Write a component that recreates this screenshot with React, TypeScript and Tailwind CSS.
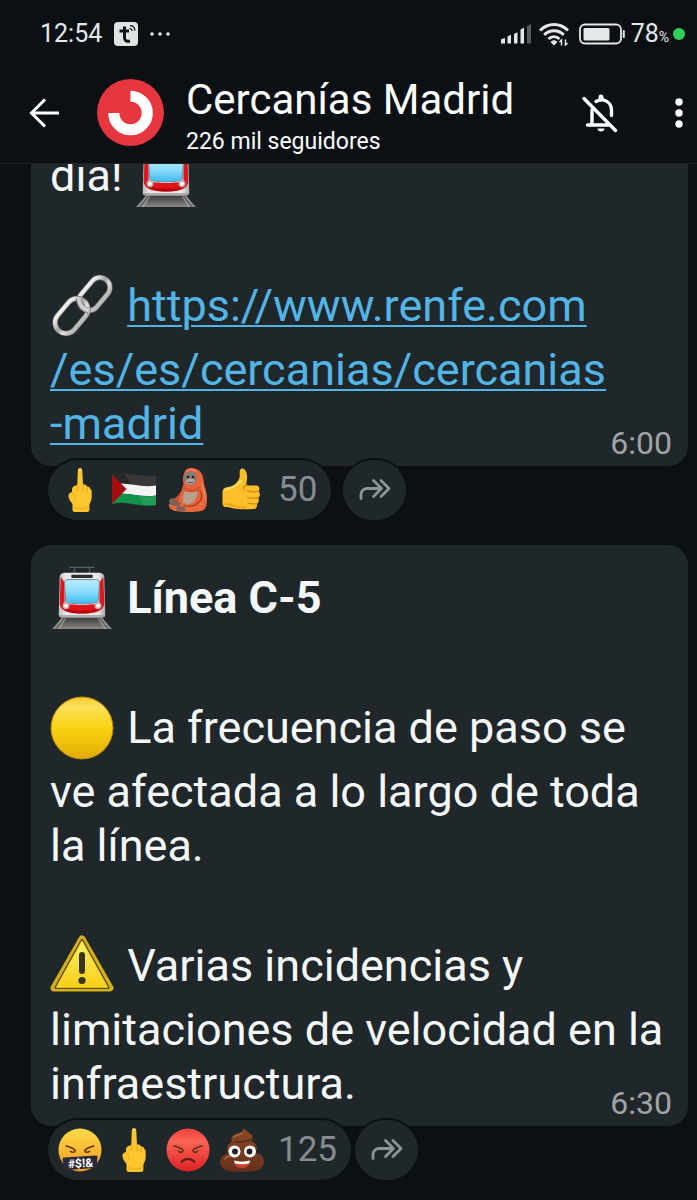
import type { ReactNode } from "react";

type IconProps = { className?: string };

const TrainEmoji = ({ className }: IconProps) => (
  <svg viewBox="0 0 64 66" className={className} role="img" aria-label="tren">
    <defs>
      <linearGradient id="glass" x1="0" y1="0" x2="0" y2="1">
        <stop offset="0" stopColor="#b9ecff" />
        <stop offset="0.5" stopColor="#8adcfc" />
        <stop offset="1" stopColor="#3fb9ee" />
      </linearGradient>
      <linearGradient id="bed" x1="0" y1="0" x2="0" y2="1">
        <stop offset="0" stopColor="#3c3a3a" />
        <stop offset="1" stopColor="#8c8989" />
      </linearGradient>
      <linearGradient id="shell" x1="0" y1="0" x2="1" y2="0">
        <stop offset="0" stopColor="#bdbdbd" />
        <stop offset="0.15" stopColor="#e9e9e9" />
        <stop offset="0.85" stopColor="#e9e9e9" />
        <stop offset="1" stopColor="#a9a9a9" />
      </linearGradient>
    </defs>
    <path d="M19 1.500h26M25 1.500l-1.500 3 2 3M39 1.500l1.500 3-2 3" fill="none" stroke="#566066" strokeWidth="1.200" />
    <path d="M12 53h40l11 12H1z" fill="url(#bed)" />
    <path d="M11 53L1 65h5l8-12zM53 53l10 12h-5l-8-12z" fill="#666" />
    <path d="M12 54L3 65M52 54l9 11M15 54L8 65M49 54l7 11" stroke="#b5b5b5" strokeWidth="1" />
    <path d="M15 7h34c4 0 6 2 6 5l1 38c0 2-1 3-3 3H11c-2 0-3-1-3-3l1-38c0-3 2-5 6-5z" fill="url(#shell)" />
    <path d="M10 11l4 6v21c4 3 32 3 36 0V17l4-6 1 28c-1 7-7 10-23 10S10 46 9 39z" fill="#e0141c" />
    <path d="M13 43c7 4 31 4 38 0-3 4-9 6-19 6s-16-2-19-6z" fill="#b80008" />
    <rect x="21" y="9" width="22" height="3.500" rx="0.800" fill="#2b2b2e" />
    <path d="M18 14h28c3 0 4 1 4 4l-1 16c0 3-1 4-4 4-7 1.500-19 1.500-26 0-3 0-4-1-4-4l-1-16c0-3 1-4 4-4z" fill="url(#glass)" stroke="#6f8791" strokeWidth="1" />
    <circle cx="15.500" cy="41" r="3.600" fill="#b7b0ae" />
    <circle cx="48.500" cy="41" r="3.600" fill="#b7b0ae" />
    <circle cx="15.500" cy="41" r="2.100" fill="#fff8ef" />
    <circle cx="48.500" cy="41" r="2.100" fill="#fff8ef" />
    <path d="M9 51.500h46" stroke="#9b9b9b" strokeWidth="1.500" />
  </svg>
);

const LinkEmoji = ({ className }: IconProps) => (
  <svg viewBox="0 0 64 64" className={className} role="img" aria-label="enlace">
    <defs>
      <linearGradient id="steel" x1="0" y1="0" x2="0" y2="1">
        <stop offset="0" stopColor="#efefed" />
        <stop offset="0.45" stopColor="#a3a3a1" />
        <stop offset="0.7" stopColor="#e2e2e0" />
        <stop offset="1" stopColor="#b9b9b7" />
      </linearGradient>
    </defs>
    <g fill="none">
      <rect x="-18.500" y="-10" width="37" height="20" rx="10" transform="translate(44.500 20) rotate(-50)" stroke="#6b6b6a" strokeWidth="5.400" />
      <rect x="-18.500" y="-10" width="37" height="20" rx="10" transform="translate(44.500 20) rotate(-50)" stroke="url(#steel)" strokeWidth="4" />
      <rect x="-19.500" y="-11" width="39" height="22" rx="11" transform="translate(21.500 42) rotate(-50)" stroke="#6b6b6a" strokeWidth="5.400" />
      <rect x="-19.500" y="-11" width="39" height="22" rx="11" transform="translate(21.500 42) rotate(-50)" stroke="url(#steel)" strokeWidth="4" />
      <path d="M28.500 24c.5 6 3.500 11 10 12.500" stroke="#6b6b6a" strokeWidth="5.400" />
      <path d="M28.500 23.500c.5 6 3.500 11.500 10.500 13" stroke="#cfcfcd" strokeWidth="4" />
    </g>
  </svg>
);

const YellowCircleEmoji = ({ className }: IconProps) => (
  <svg viewBox="0 0 64 64" className={className} role="img" aria-label="amarillo">
    <defs>
      <linearGradient id="sun" x1="0" y1="0" x2="0" y2="1">
        <stop offset="0" stopColor="#f6c92c" />
        <stop offset="0.16" stopColor="#fddf5c" />
        <stop offset="0.5" stopColor="#f8d312" />
        <stop offset="1" stopColor="#e3ab05" />
      </linearGradient>
    </defs>
    <circle cx="32" cy="32" r="31" fill="url(#sun)" stroke="#b98a0c" strokeWidth="1" />
  </svg>
);

const WarningEmoji = ({ className }: IconProps) => (
  <svg viewBox="0 0 64 64" className={className} role="img" aria-label="aviso">
    <defs>
      <linearGradient id="sign" x1="0" y1="0" x2="0" y2="1">
        <stop offset="0" stopColor="#fff069" />
        <stop offset="1" stopColor="#f7cf16" />
      </linearGradient>
    </defs>
    <path d="M32 5L60 54H4z" fill="#d3b01b" stroke="#d3b01b" strokeWidth="7" strokeLinejoin="round" />
    <path d="M32 6.500L58 53.500H6z" fill="url(#sign)" stroke="#5f4c13" strokeWidth="3" strokeLinejoin="round" />
    <path d="M32 7L57.500 53.200H6.500z" fill="url(#sign)" stroke="#f9dc2d" strokeWidth="1" strokeLinejoin="round" />
    <rect x="29" y="18" width="6" height="22" rx="3" fill="#37341f" />
    <circle cx="32" cy="46.500" r="3.600" fill="#37341f" />
  </svg>
);

const MiddleFingerEmoji = ({ className }: IconProps) => (
  <svg viewBox="0 0 44 44" className={className} aria-hidden="true">
    <path d="M22 0c1.600 0 2.200 1.200 2.300 3l.7 13.500c2-.3 3.600.2 4.100 2 1.800-.1 3 .8 3.300 2.500 1 .6 1.300 1.600 1.300 3.200v4.800c0 3.500-1.600 5.500-2.300 7.500V42c0 1.300-1 2-2.500 2H17c-1.500 0-2.500-.7-2.500-2v-6c-2-2.500-4-5-4-8 0-2.500 1.600-3.700 3.500-4v-2.500c0-2.300 1.600-3.500 4-4l1.300-1 .5-13.500C19.900 1.200 20.500 0 22 0z" fill="#fdc52e" />
    <path d="M19.300 17.500v5M25 17v6M29.200 19.500v5" stroke="#e8a520" strokeWidth="1" fill="none" strokeLinecap="round" />
    <path d="M14.500 25c2 2.500 3 3.500 2.500 7M15.500 39.500c5 1.500 11 1.500 15.500 0" stroke="#eeab1e" strokeWidth="1" fill="none" />
    <path d="M20.500 2.500c.8-1 2.200-1 3 0" stroke="#ffe69b" strokeWidth="1.200" fill="none" />
  </svg>
);

const FlagEmoji = ({ className }: IconProps) => (
  <svg viewBox="0 0 44 44" className={className} aria-hidden="true">
    <path d="M0 6.500c14-4 26 4 44 .8v11C28 21 14 13 0 17z" fill="#292929" />
    <path d="M0 16.500c14-3.500 28 4 44 1v10C28 30 14 23 0 27z" fill="#f4f4f4" />
    <path d="M0 26.500c14-3.500 28 4 44 1v9.500C28 40 14 32 0 36z" fill="#11944a" />
    <path d="M0 6.500L14.500 21 0 36z" fill="#a50d10" />
    <path d="M12 5.600c10 .2 20 3.500 32 1.700V37c-4 .8-8 .6-12-.2z" fill="#fff" opacity="0.070" />
  </svg>
);

const OrangutanEmoji = ({ className }: IconProps) => (
  <svg viewBox="0 0 44 44" className={className} aria-hidden="true">
    <path d="M25 0c8 0 12 5 12.500 12 .3 5 2 9 3 14 1.200 7 .5 14-3.500 16.500-6 2-20 2-28 .5-4-1-7-4-6-7 2-1 3-1 4-1-1-3 0-5 3-5 2-3 3-4 5-6 1-3 1.500-5 2.500-8C16 9 18 0 25 0z" fill="#e5643a" />
    <path d="M20 20c4 2 8 2 11 0 1.500 6-1 12-5 15-4 2-7 2-9-1-.5-5 1-10 3-14z" fill="#b9a08c" />
    <path d="M17 17c4 5 13 5 17 1l.5 4c-5 3-13.500 3-18 0z" fill="#d95330" />
    <path d="M33 20c4 8 2 13-3 16l-12 2-5 4 20 1c7-3 9-16 6-23z" fill="#ea693d" />
    <path d="M3 32c2-3 6-2 8 1l4 2-2 3-9-1zM11 38l8 1 1 4-10-.6z" fill="#7c6358" />
    <path d="M32 35c-3 3-8 4-14 2.500M34 22c3 6 2 10-2 13M14 26c-2 3-3 5-3 8" stroke="#a53a22" strokeWidth="1.200" fill="none" />
    <path d="M18.500 6.500c3-4 9.500-4 11.500 0 1.500 4 .3 8-2.200 10-2 1-4.600 1-6.600 0-2.700-2.700-4-6-2.700-10z" fill="#857b77" />
    <path d="M20 12c3-2 6.500-2 8.500 0 .5 3-1.500 4.500-4.200 4.500S19.500 15 20 12z" fill="#b0a59f" />
    <circle cx="22" cy="9" r="1.300" fill="#231d1c" />
    <circle cx="27" cy="9" r="1.300" fill="#231d1c" />
    <path d="M22 14.200c2 .7 3.500.7 5 0" stroke="#4c403d" strokeWidth="1" fill="none" />
    <path d="M20 3c3-2.500 8-2 10 1M36 14c1 7 3 10 3 17" stroke="#f48a5d" strokeWidth="1.200" fill="none" />
  </svg>
);

const ThumbEmoji = ({ className }: IconProps) => (
  <svg viewBox="0 0 44 44" className={className} aria-hidden="true">
    <path d="M2.500 24c0-3 2-4.500 5.500-5 6-.8 9.500-4.500 11.500-9 .8-3-1-8 2-9.500 3-.7 5 2.500 5.500 6.500.3 4-.5 7.500-1 10.500h10c3.500 0 4.500 4 2.300 5.800 2.200 1.700 2 5.200-.3 6.500 1.500 1.800 1 4.800-1.300 5.800 1 2.400 0 5.400-3.200 5.400-7 .4-15 .4-20-.5-3-1-5.500-1.500-8-1.500-2 0-3-2-3-4z" fill="#fdc02b" />
    <path d="M39 23.200c-4 .8-8 .7-12-.3M38.500 29.800c-4 .8-8 .6-11-.3M37.200 35.600c-3 .6-6 .4-9-.4M27 17c-3 0-4 2-3 5" stroke="#d98b12" strokeWidth="1.300" fill="none" strokeLinecap="round" />
    <path d="M5 22c6-2 12-3 16-9" stroke="#ffdc6b" strokeWidth="2" fill="none" strokeLinecap="round" />
    <path d="M5 36c7 0 10 4 21 3.500" stroke="#eda51d" strokeWidth="2" fill="none" />
  </svg>
);

const Brows = () => (
  <g fill="none" stroke="#5a2a17" strokeWidth="1.500" strokeLinecap="round">
    <path d="M8 18c4 1.200 8.500 2.500 9 4.500.2 2-3 2.500-4.500.8" />
    <path d="M36 18c-4 1.200-8.500 2.500-9 4.500-.2 2 3 2.500 4.500.8" />
  </g>
);

const SwearingEmoji = ({ className }: IconProps) => (
  <svg viewBox="0 0 44 44" className={className} aria-hidden="true">
    <defs>
      <linearGradient id="swearing" x1="0" y1="0" x2="0" y2="1">
        <stop offset="0" stopColor="#fddb48" />
        <stop offset="1" stopColor="#f49a1f" />
      </linearGradient>
    </defs>
    <circle cx="22" cy="22" r="21.500" fill="url(#swearing)" />
    <Brows />
    <path d="M6 29.500l32-2c.8 0 1.500.4 1.500 1l-.8 10c0 .7-.5 1.200-1.200 1.400L8 42c-.8 0-1.300-.3-1.500-1l-2-10c-.2-.8.500-1.500 1.500-1.500z" fill="#2b2938" />
    <text x="22.500" y="39.500" textAnchor="middle" transform="rotate(-4 22 35)" fontFamily="Roboto, sans-serif" fontWeight="700" fontSize="12" fill="#fff">
      #$!&amp;
    </text>
  </svg>
);

const AngryEmoji = ({ className }: IconProps) => (
  <svg viewBox="0 0 44 44" className={className} aria-hidden="true">
    <defs>
      <linearGradient id="angry" x1="0" y1="0" x2="0" y2="1">
        <stop offset="0" stopColor="#f5403e" />
        <stop offset="0.3" stopColor="#fb6456" />
        <stop offset="1" stopColor="#dc2023" />
      </linearGradient>
    </defs>
    <circle cx="22" cy="22" r="21.500" fill="url(#angry)" />
    <Brows />
    <path d="M15.500 34c3-4 10-4 13 0" fill="none" stroke="#5a1a17" strokeWidth="2" strokeLinecap="round" />
  </svg>
);

const PoopEmoji = ({ className }: IconProps) => (
  <svg viewBox="0 0 44 44" className={className} aria-hidden="true">
    <defs>
      <linearGradient id="poop" x1="0" y1="0" x2="0" y2="1">
        <stop offset="0" stopColor="#8a4a26" />
        <stop offset="1" stopColor="#65301a" />
      </linearGradient>
    </defs>
    <path d="M24 0c1 3 8 5 8.500 9 .3 2-.5 3.300-1.300 4.500 4 1 6.500 4 5.300 8.500 0 1.500-.5 2.500-1 3 5 .5 8.500 4 8.500 9 0 6-5 9-11 9.200-8 .8-15 .8-22 0C5 42.500 0 40 0 34.500c0-5 3.500-8 8-9C5.500 20 8 15.500 12 14.500c-2-5 1-8 5.500-9C21 4.500 23 3 24 0z" fill="url(#poop)" />
    <path d="M14 14c7 .5 13-.5 17-3M8 26c4 2 8 2 11 1.500M26 27.500c4 0 8-.8 10-2.500" stroke="#4f2513" strokeWidth="1.200" fill="none" strokeLinecap="round" />
    <path d="M14 9c2-2 5-2 8-3.500M5 31c1-2 3-3 5-3" stroke="#a86a42" strokeWidth="1.500" fill="none" strokeLinecap="round" />
    <circle cx="14.500" cy="23.500" r="6" fill="#fff" />
    <circle cx="30" cy="23.500" r="6" fill="#fff" />
    <circle cx="15" cy="23.500" r="2.900" fill="#281c1c" />
    <circle cx="29.500" cy="23.500" r="2.900" fill="#281c1c" />
    <path d="M13.500 32.500c5 1.500 12 1.500 17 0-.5 5-4 7.500-8.500 7.500s-8-2.500-8.500-7.500z" fill="#c8402f" />
    <path d="M14 32.600c5 1.400 11 1.400 16 0l-1 3c-4 1-10 1-14 0z" fill="#fff" />
  </svg>
);

const StatusBar = () => (
  <div className="flex h-[66px] shrink-0 items-center pl-10 pr-3 pt-0.5 text-[#e4e8e8]">
    <span className="text-[25px] leading-8">12:54</span>
    <svg viewBox="0 0 24 24" className="ml-3 size-6" aria-hidden="true">
      <rect width="24" height="24" rx="4" fill="#dfe4e2" />
      <path d="M10.500 4.500v11c0 3 2 4.200 5.500 3.700M5.500 9h9.500" fill="none" stroke="#101418" strokeWidth="3" />
      <path d="M15.500 6.500c1.700 0 2.500 1 2.700 2.500M16 3.700c3 0 4.700 2 5 5" fill="none" stroke="#101418" strokeWidth="1.200" />
    </svg>
    <svg viewBox="0 0 20 4" className="ml-3 h-1 w-5" fill="currentColor" aria-hidden="true">
      <circle cx="2" cy="2" r="1.800" />
      <circle cx="10" cy="2" r="1.800" />
      <circle cx="18" cy="2" r="1.800" />
    </svg>

    <svg viewBox="0 0 30 20" className="ml-auto h-5 w-[30px]" fill="currentColor" aria-hidden="true">
      <path d="M0 19.500v-3.500q0-.8.800-1l3.200-1v5.500zM6.500 19.500v-7l3.500-1.800v8.800zM13 19.500v-9.500l3.500-1.800v11.300zM19.500 19.500V5.500L23 3.700v15.800z" />
      <path d="M26 19.500V2l4-2v19.500z" opacity="0.350" />
    </svg>
    <svg viewBox="0 0 30 24" className="ml-2 h-6 w-[30px]" aria-hidden="true">
      <g fill="none" stroke="currentColor" strokeWidth="3">
        <path d="M1 8.500c8-8 20-8 28 0" />
        <path d="M5.200 12.800c5.800-5.400 13.800-5.400 19.600 0" />
        <path d="M9.500 17c3.300-3 7.700-3 11 0" />
      </g>
      <path d="M12.500 20c1.500-1.200 3.500-1.200 5 0L15 22.500z" fill="currentColor" stroke="currentColor" strokeWidth="1.500" strokeLinejoin="round" />
      <path d="M22.500 23.500v-5.500l-2 2M26.500 17.500V23l2-2" fill="none" stroke="currentColor" strokeWidth="1.500" />
    </svg>
    <svg viewBox="0 0 46 22" className="ml-2.5 h-[22px] w-[46px]" aria-hidden="true">
      <rect x="1" y="1.500" width="41" height="19" rx="5" fill="none" stroke="currentColor" strokeWidth="1.800" />
      <rect x="4.500" y="5" width="26" height="12.500" rx="1.500" fill="currentColor" />
      <path d="M44.800 8v6" stroke="currentColor" strokeWidth="2" strokeLinecap="round" />
    </svg>
    <span className="ml-1.5 text-[25px] leading-8">
      78<span className="text-[14px] leading-none">%</span>
    </span>
    <span className="ml-1 size-3 rounded-full bg-[#30d158]" />
  </div>
);

const ChannelHeader = () => (
  <header className="flex h-[98px] shrink-0 items-center border-b border-[#1c2226] pb-1 pl-[29px] pr-2.5">
    <button type="button" aria-label="Atrás" className="shrink-0">
      <svg viewBox="0 0 32 32" className="size-8" fill="none" stroke="#fff" strokeWidth="3">
        <path d="M30 16H3M16 2.500L2.500 16 16 29.500" />
      </svg>
    </button>
    <svg viewBox="0 0 66 66" className="ml-9 size-[67px] shrink-0" role="img" aria-label="Cercanías Madrid">
      <circle cx="33" cy="33" r="33" fill="#e63640" />
      <path d="M33 17a16.500 16.500 0 1 1-16.500 16.500" fill="none" stroke="#fff" strokeWidth="11" />
    </svg>
    <div className="ml-[22px] mt-1.5 min-w-0 flex-1 text-white">
      <h1 className="truncate text-[42px] leading-[52px]">Cercanías Madrid</h1>
      <p className="text-[23px] leading-8">226 mil seguidores</p>
    </div>
    <button type="button" aria-label="Silenciado" className="shrink-0">
      <svg viewBox="0 0 38 40" className="h-10 w-[38px]" fill="none" stroke="#fff" strokeWidth="3.400" strokeLinecap="round">
        <path d="M3 5.500l31.500 32" />
        <path d="M11 17v14.500M6.500 32H28" />
        <path d="M15 8.500c7-4 15.500 0 15.500 9v5" />
        <path d="M20 4v2" strokeWidth="5" />
        <path d="M16.500 35.500h7c0 4-7 4-7 0z" fill="#fff" stroke="none" />
      </svg>
    </button>
    <button type="button" aria-label="Más opciones" className="ml-[52px] shrink-0">
      <svg viewBox="0 0 16 32" className="h-8 w-4" fill="#fff">
        <circle cx="8" cy="5" r="3.700" />
        <circle cx="8" cy="16" r="3.700" />
        <circle cx="8" cy="27" r="3.700" />
      </svg>
    </button>
  </header>
);

const emojiInText = "mr-0.5 mb-[5px] mt-[7px] inline-block size-16 align-[-22px]";

const Bubble = ({ time, children }: { time: string; children: ReactNode }) => (
  <article className="rounded-[20px] bg-[#20272a] pb-[7px] pl-[19px] pr-4 pt-[14px] text-[45px] leading-[54px] text-[#f5f8fa]">
    {children}
    <time className="-mt-6 block text-right text-[32px] leading-8 text-[#a0a4a6]">
      {time}
    </time>
  </article>
);

const Reactions = ({
  count,
  className,
  children,
}: {
  count: number;
  className: string;
  children: ReactNode;
}) => (
  <div className={`-mt-1.5 ml-[17px] flex ${className}`}>
    <button
      type="button"
      className="flex h-[60px] items-center gap-2.5 rounded-full bg-[#20272a] pl-2.5 pr-[14px] text-[35px] text-[#868d90] ring-2 ring-[#0b1014]"
    >
      {children}
      <span className="ml-1">{count}</span>
    </button>
    <button
      type="button"
      aria-label="Reenviar"
      className="flex h-[60px] w-[63px] items-center justify-center rounded-full bg-[#20272a] text-[#8d9497] ring-2 ring-[#0b1014]"
    >
      <svg viewBox="0 0 32 24" className="h-6 w-8" fill="none" stroke="currentColor" strokeWidth="2.800" strokeLinecap="round" strokeLinejoin="round">
        <path d="M2 20.500V17c0-4 2.500-6.500 6.500-6.500h13" />
        <path d="M14.500 2.500l8 8-8 8M22 2.500l8 8-8 8" />
      </svg>
    </button>
  </div>
);

const App = () => {
  return (
    <div className="flex h-screen flex-col overflow-hidden bg-[#0b1014] font-['Roboto',sans-serif]">
      <StatusBar />
      <ChannelHeader />

      <main className="flex min-h-0 flex-1 flex-col justify-end overflow-hidden pb-5 pl-[31px] pr-[9px]">
        <section className="shrink-0">
          <Bubble time="6:00">
            <p>
              día! <TrainEmoji className={emojiInText} />
            </p>
            <br />
            <p>
              <LinkEmoji className={emojiInText} />{" "}
              <a
                href="https://www.renfe.com/es/es/cercanias/cercanias-madrid"
                className="text-[#53b5e6] underline decoration-2 underline-offset-4"
              >
                <span className="whitespace-nowrap">https://www.renfe.com</span>
                <wbr />
                <span className="whitespace-nowrap">/es/es/cercanias/cercanias</span>
                <wbr />
                <span className="whitespace-nowrap">-madrid</span>
              </a>
            </p>
          </Bubble>
          <Reactions count={50} className="gap-3">
            <MiddleFingerEmoji className="size-11" />
            <FlagEmoji className="size-11" />
            <OrangutanEmoji className="size-11" />
            <ThumbEmoji className="size-11" />
          </Reactions>
        </section>

        <section className="mt-[25px] shrink-0">
          <Bubble time="6:30">
            <p className="font-bold">
              <TrainEmoji className={emojiInText} /> Línea C-5
            </p>
            <br />
            <p>
              <YellowCircleEmoji className={emojiInText} /> La frecuencia de
              paso se ve afectada a lo largo de toda la línea.
            </p>
            <br />
            <p>
              <WarningEmoji className={emojiInText} /> Varias incidencias y
              limitaciones de velocidad en la infraestructura.
            </p>
          </Bubble>
          <Reactions count={125} className="gap-1">
            <SwearingEmoji className="size-11" />
            <MiddleFingerEmoji className="size-11" />
            <AngryEmoji className="size-11" />
            <PoopEmoji className="size-11" />
          </Reactions>
        </section>
      </main>
    </div>
  );
};

export default App;
